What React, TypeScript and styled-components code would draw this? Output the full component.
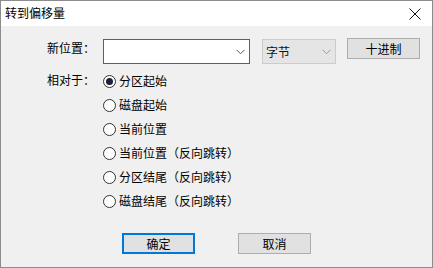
import React from 'react';
import styled, { createGlobalStyle } from 'styled-components';

const Global = createGlobalStyle`
  html, body { margin: 0; padding: 0; background: #f0f0f0; }
  body {
    font-family: "Noto Sans CJK SC", "Microsoft YaHei", sans-serif;
    font-size: 12px;
    color: #000;
  }
  * { box-sizing: border-box; }
`;

const Window = styled.div`
  width: 433px;
  height: 268px;
  border: 1px solid #8c8c8c;
  display: flex;
  flex-direction: column;
  background: #f0f0f0;
`;

const TitleBar = styled.div`
  height: 25px;
  background: #fff;
  display: flex;
  align-items: center;
  justify-content: space-between;
  padding-left: 4px;
`;

const Title = styled.span`
  font-size: 12px;
  line-height: 16px;
  margin-top: -1px;
`;

const CloseBtn = styled.div`
  width: 32px;
  height: 25px;
  display: flex;
  align-items: center;
  justify-content: center;
  margin-right: 1px;
`;

const Content = styled.div`
  display: flex;
  flex-direction: column;
  padding-top: 12px;
`;

const FormRow = styled.div`
  display: flex;
  align-items: flex-start;
  height: 26px;
`;

const Label = styled.div<{ $top?: number }>`
  width: 102px;
  padding-left: 46px;
  line-height: 16px;
  margin-top: ${(p) => p.$top ?? 0}px;
  white-space: nowrap;
`;

const Combo = styled.div`
  width: 147px;
  height: 25px;
  margin-top: 1px;
  border: 1px solid #0078d7;
  background: #fff;
  display: flex;
  align-items: center;
  justify-content: flex-end;
  padding-right: 4px;
`;

const UnitSelect = styled.div`
  width: 74px;
  height: 25px;
  margin-top: 1px;
  margin-left: 12px;
  border: 1px solid #cccccc;
  background: #e5e5e5;
  display: flex;
  align-items: center;
  justify-content: space-between;
  padding: 0 4px 0 3px;
  line-height: 16px;
  color: #111;
`;

const Button = styled.div<{ $primary?: boolean }>`
  width: 73px;
  height: 21px;
  border: ${(p) => (p.$primary ? '2px solid #0078d7' : '1px solid #adadad')};
  background: #e1e1e1;
  display: flex;
  align-items: center;
  justify-content: center;
  line-height: 16px;
`;

const HexButton = styled(Button)`
  margin-left: 11px;
`;

const RadioSection = styled.div`
  display: flex;
  align-items: flex-start;
  margin-top: 5px;
`;

const RadioLabel = styled.div`
  width: 102px;
  padding-left: 46px;
  height: 24px;
  line-height: 22px;
  white-space: nowrap;
`;

const RadioList = styled.div`
  display: flex;
  flex-direction: column;
`;

const RadioRow = styled.div`
  height: 24px;
  display: flex;
  align-items: center;
  gap: 3px;
  white-space: nowrap;
  line-height: 16px;
`;

const Circle = styled.span<{ $checked?: boolean }>`
  width: 13px;
  height: 13px;
  border-radius: 50%;
  border: 1px solid #333;
  background: #fff;
  display: flex;
  align-items: center;
  justify-content: center;
  &::after {
    content: '';
    width: 7px;
    height: 7px;
    border-radius: 50%;
    background: ${(p) => (p.$checked ? '#1f1f3a' : 'transparent')};
  }
`;

const Footer = styled.div`
  display: flex;
  margin-top: 20px;
  padding-left: 121px;
  gap: 43px;
`;

const Chevron = ({ color }: { color: string }) => (
  <svg width="9" height="6" viewBox="0 0 9 6">
    <path d="M0.5 0.8 L4.5 4.8 L8.5 0.8" fill="none" stroke={color} strokeWidth="1" />
  </svg>
);

const options = [
  '分区起始',
  '磁盘起始',
  '当前位置',
  '当前位置（反向跳转）',
  '分区结尾（反向跳转）',
  '磁盘结尾（反向跳转）',
];

export default function App() {
  return (
    <>
      <Global />
      <Window>
        <TitleBar>
          <Title>转到偏移量</Title>
          <CloseBtn>
            <svg width="12" height="12" viewBox="0 0 12 12">
              <path d="M0.5 0.5 L11.5 11.5 M11.5 0.5 L0.5 11.5" stroke="#111" strokeWidth="1" />
            </svg>
          </CloseBtn>
        </TitleBar>
        <Content>
          <FormRow>
            <Label $top={2}>新位置：</Label>
            <Combo>
              <Chevron color="#555" />
            </Combo>
            <UnitSelect>
              <span>字节</span>
              <Chevron color="#999" />
            </UnitSelect>
            <HexButton>十进制</HexButton>
          </FormRow>
          <RadioSection>
            <RadioLabel>相对于：</RadioLabel>
            <RadioList>
              {options.map((o, i) => (
                <RadioRow key={o}>
                  <Circle $checked={i === 0} />
                  <span>{o}</span>
                </RadioRow>
              ))}
            </RadioList>
          </RadioSection>
          <Footer>
            <Button $primary>确定</Button>
            <Button>取消</Button>
          </Footer>
        </Content>
      </Window>
    </>
  );
}
